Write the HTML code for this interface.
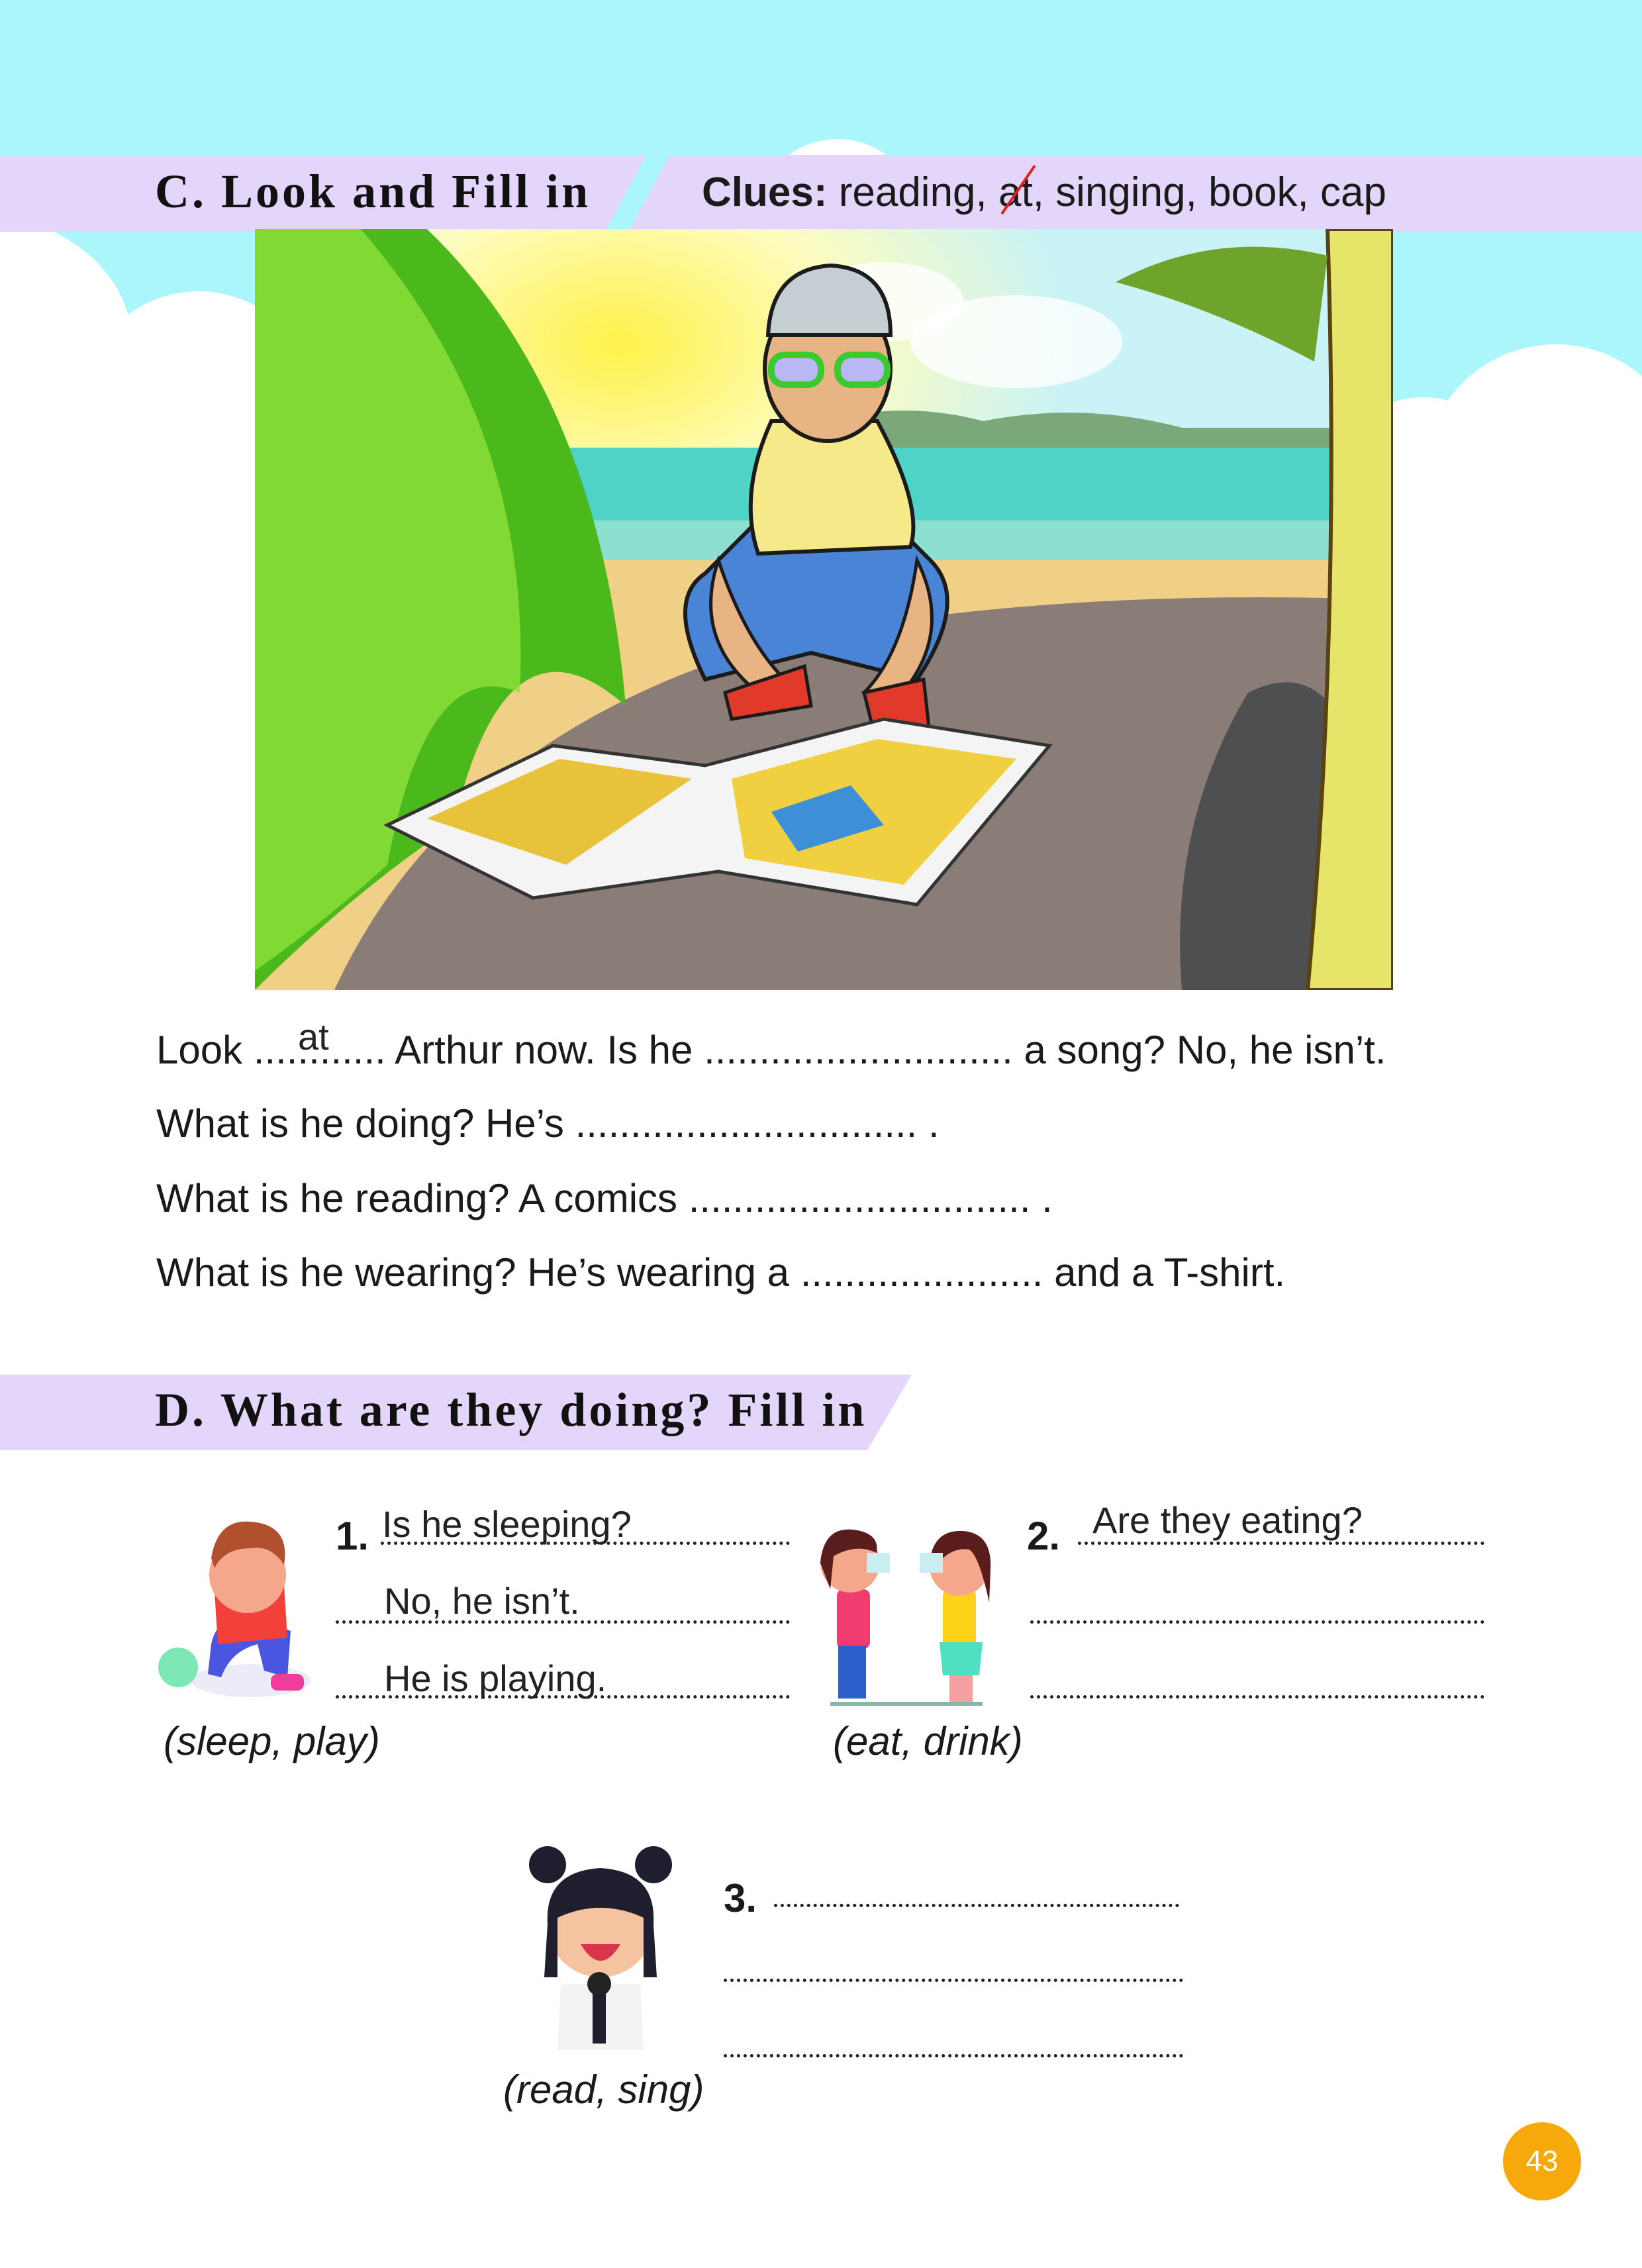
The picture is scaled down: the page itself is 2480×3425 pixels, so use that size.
<!DOCTYPE html>
<html><head><meta charset="utf-8"><style>
*{margin:0;padding:0;box-sizing:border-box}
body{width:2480px;height:3425px;position:relative;background:#fff;overflow:hidden;font-family:"Liberation Sans",sans-serif;color:#1a1a1a}
.a{position:absolute}
.t{position:absolute;font-size:60px;white-space:nowrap;line-height:1}
.h{font-family:"Liberation Serif",serif;font-weight:bold;font-size:72px;letter-spacing:4px;position:absolute;white-space:nowrap;line-height:1;color:#111}
.dl{position:absolute;height:0;border-bottom:5px dotted #222}
.hw{position:absolute;font-size:56px;white-space:nowrap;line-height:1;color:#222}
.it{font-style:italic}
</style></head><body>
<div class="a" style="left:0;top:0;width:2480px;height:620px;background:#aaf6fb"></div>
<div class="a" style="left:1140px;top:210px;width:250px;height:250px;border-radius:50%;background:#fff"></div>
<div class="a" style="left:-300px;top:320px;width:500px;height:400px;border-radius:50%;background:#fff"></div>
<div class="a" style="left:120px;top:440px;width:360px;height:360px;border-radius:50%;background:#fff"></div>
<div class="a" style="left:0;top:620px;width:2480px;height:200px;background:#fff"></div>
<div class="a" style="left:2150px;top:520px;width:400px;height:400px;border-radius:50%;background:#fff"></div>
<div class="a" style="left:2000px;top:600px;width:300px;height:300px;border-radius:50%;background:#fff"></div>
<svg class="a" style="left:0;top:234px" width="2480" height="116"><polygon points="0,0 976,0 914,116 0,116" fill="#e4d6fb"/><polygon points="1012,0 2480,0 2480,116 949,116" fill="#e4d6fb"/></svg>
<div class="h" style="left:234px;top:253px">C. Look and Fill in</div>
<div class="t" style="left:1060px;top:260px;font-size:62px"><b>Clues:</b> reading, <span style="position:relative">at<svg style="position:absolute;left:-5px;top:-8px" width="70" height="80"><line x1="10" y1="75" x2="60" y2="2" stroke="#e02020" stroke-width="4"/></svg></span>, singing, book, cap</div>
<svg class="a" style="left:385px;top:346px" width="1719" height="1149" viewBox="0 0 1719 1149">
<defs><radialGradient id="sun" cx="0.32" cy="0.15" r="0.4"><stop offset="0" stop-color="#fff24a"/><stop offset="0.5" stop-color="#fdfcc0"/><stop offset="1" stop-color="#c9f3f7"/></radialGradient></defs>
<rect width="1719" height="1149" fill="url(#sun)"/>
<ellipse cx="950" cy="110" rx="120" ry="60" fill="#fff" opacity=".8"/><ellipse cx="1150" cy="170" rx="160" ry="70" fill="#fff" opacity=".8"/>
<path d="M800 310 Q950 250 1100 290 Q1250 260 1400 300 L1719 300 L1719 340 L800 340Z" fill="#7ba87a"/>
<rect y="330" width="1719" height="170" fill="#4fd3c6"/>
<rect y="440" width="1719" height="60" fill="#8de0d0"/>
<rect y="500" width="1719" height="650" fill="#f0cf86"/>
<path d="M120 1149 Q300 760 800 620 Q1200 540 1719 560 L1719 1149Z" fill="#8a7d77"/>
<path d="M1500 700 Q1600 650 1650 760 L1660 1149 L1400 1149 Q1380 900 1500 700Z" fill="#4d4f50"/>
<path d="M0 0 L260 0 Q520 250 560 720 Q380 560 300 900 Q150 1000 0 1149Z" fill="#4bb81c"/>
<path d="M0 0 L160 0 Q420 300 400 700 Q260 640 200 960 Q100 1050 0 1120Z" fill="#8fe23a" opacity=".8"/>
<path d="M1620 0 L1719 0 L1719 1149 L1590 1149 Q1640 600 1620 0Z" fill="#e7e46a" stroke="#5a4310" stroke-width="6"/>
<path d="M1300 80 Q1450 0 1620 40 L1600 200 Q1450 120 1300 80Z" fill="#6fa42c"/>
<path d="M680 520 Q620 560 680 680 L840 640 L1000 680 Q1080 560 1020 500 L940 420 L780 420Z" fill="#4a84d6" stroke="#1b1b1b" stroke-width="6"/>
<path d="M780 290 L940 290 Q1010 420 990 480 L760 490 Q730 400 780 290Z" fill="#f5e98a" stroke="#1b1b1b" stroke-width="6"/>
<path d="M700 500 Q740 620 800 680 L760 700 Q660 620 700 500Z" fill="#e9b483" stroke="#1b1b1b" stroke-width="5"/>
<path d="M1000 500 Q980 640 920 700 L960 720 Q1060 620 1000 500Z" fill="#e9b483" stroke="#1b1b1b" stroke-width="5"/>
<ellipse cx="865" cy="210" rx="95" ry="110" fill="#e9b483" stroke="#1b1b1b" stroke-width="6"/>
<path d="M775 160 Q780 60 870 55 Q960 60 960 160 Z" fill="#c5cfd3" stroke="#1b1b1b" stroke-width="6"/>
<rect x="780" y="190" width="75" height="45" rx="20" fill="#b9b8f4" stroke="#3ac92e" stroke-width="10"/>
<rect x="880" y="190" width="75" height="45" rx="20" fill="#b9b8f4" stroke="#3ac92e" stroke-width="10"/>
<path d="M710 700 L830 660 L840 720 L720 740Z" fill="#e23a2a" stroke="#1b1b1b" stroke-width="5"/>
<path d="M920 700 L1010 680 L1030 860 L960 860Z" fill="#e23a2a" stroke="#1b1b1b" stroke-width="5"/>
<path d="M200 900 L450 780 L680 810 L950 740 L1200 780 L1000 1020 L700 970 L420 1010Z" fill="#f4f4f4" stroke="#333" stroke-width="5"/>
<path d="M260 890 L460 800 L660 830 L470 960Z" fill="#e8c23a"/><path d="M720 830 L940 770 L1150 800 L980 990 L740 950Z" fill="#f0d040"/>
<path d="M780 880 L900 840 L950 900 L820 940Z" fill="#3d8fd6"/>
</svg>
<div class="t" style="left:236px;top:1556px">Look ............ Arthur now. Is he ............................ a song? No, he isn’t.</div>
<div class="hw" style="left:450px;top:1538px">at</div>
<div class="t" style="left:236px;top:1667px">What is he doing? He’s ............................... .</div>
<div class="t" style="left:236px;top:1780px">What is he reading? A comics ............................... .</div>
<div class="t" style="left:236px;top:1892px">What is he wearing? He’s wearing a ...................... and a T-shirt.</div>
<svg class="a" style="left:0;top:2076px" width="1400" height="114"><polygon points="0,0 1377,0 1310,114 0,114" fill="#e4d6fb"/></svg>
<div class="h" style="left:234px;top:2093px">D. What are they doing? Fill in</div>
<svg class="a" style="left:229px;top:2283px" width="250" height="300" viewBox="0 0 250 300">
<ellipse cx="150" cy="255" rx="90" ry="25" fill="#ecebf8"/>
<circle cx="40" cy="235" r="30" fill="#7de8b5"/>
<path d="M90 200 Q100 150 160 160 L210 180 L205 250 L170 240 L160 200 Q120 210 105 250 L85 245Z" fill="#4a55e0"/>
<path d="M95 120 L200 110 L205 190 L100 200Z" fill="#f2403a"/>
<circle cx="145" cy="95" r="58" fill="#f4a78a"/>
<path d="M90 70 Q100 10 150 15 Q210 20 200 80 Q180 50 150 55 Q110 55 95 85Z" fill="#b0502f"/>
<rect x="180" y="245" width="50" height="25" rx="10" fill="#f03c9a"/>
</svg>
<div class="t" style="left:507px;top:2290px;font-weight:bold">1.</div>
<div class="dl" style="left:575px;top:2328px;width:618px"></div>
<div class="hw" style="left:577px;top:2274px">Is he sleeping?</div>
<div class="dl" style="left:507px;top:2447px;width:686px"></div>
<div class="hw" style="left:580px;top:2390px">No, he isn’t.</div>
<div class="dl" style="left:507px;top:2560px;width:686px"></div>
<div class="hw" style="left:580px;top:2507px">He is playing.</div>
<div class="t it" style="left:247px;top:2600px">(sleep, play)</div>
<svg class="a" style="left:1224px;top:2290px" width="330" height="300" viewBox="0 0 330 300">
<rect x="30" y="280" width="230" height="6" fill="#88b7a8"/>
<rect x="40" y="110" width="50" height="90" rx="10" fill="#f03c70"/><rect x="42" y="195" width="42" height="80" fill="#2d5ec9"/>
<circle cx="60" cy="70" r="45" fill="#f4a78a"/><path d="M15 70 Q20 15 65 20 Q105 25 100 55 Q70 40 35 60 L30 110Z" fill="#5a1d1d"/>
<rect x="200" y="110" width="50" height="90" rx="10" fill="#ffd21a"/><path d="M195 190 L260 190 L255 240 L200 240Z" fill="#4fe0c2"/><rect x="210" y="240" width="35" height="40" fill="#f4a0a0"/>
<circle cx="225" cy="75" r="45" fill="#f4a78a"/><path d="M180 70 Q185 20 230 22 Q275 25 272 80 L270 130 Q255 60 240 50 Q210 45 185 80Z" fill="#5a1d1d"/>
<rect x="85" y="55" width="35" height="30" fill="#c9eef2"/><rect x="165" y="55" width="35" height="30" fill="#c9eef2"/>
</svg>
<div class="t" style="left:1551px;top:2290px;font-weight:bold">2.</div>
<div class="dl" style="left:1628px;top:2328px;width:614px"></div>
<div class="hw" style="left:1650px;top:2268px">Are they eating?</div>
<div class="dl" style="left:1556px;top:2447px;width:686px"></div>
<div class="dl" style="left:1556px;top:2560px;width:686px"></div>
<div class="t it" style="left:1258px;top:2600px">(eat, drink)</div>
<svg class="a" style="left:787px;top:2786px" width="250" height="330" viewBox="0 0 250 330">
<circle cx="40" cy="30" r="28" fill="#1e1e2e"/><circle cx="200" cy="30" r="28" fill="#1e1e2e"/>
<path d="M60 210 L180 210 L185 310 L55 310Z" fill="#f3f3f3"/>
<circle cx="120" cy="120" r="80" fill="#f6c3a0"/>
<path d="M40 120 Q35 40 120 35 Q205 40 200 120 L205 200 L185 200 L185 110 Q120 80 55 110 L55 200 L35 200Z" fill="#1e1e2e"/>
<path d="M90 150 Q120 200 150 150Z" fill="#d8344a"/>
<rect x="108" y="210" width="20" height="90" fill="#1e1e2e"/><circle cx="118" cy="210" r="18" fill="#222"/>
</svg>
<div class="t" style="left:1093px;top:2837px;font-weight:bold">3.</div>
<div class="dl" style="left:1169px;top:2875px;width:612px"></div>
<div class="dl" style="left:1093px;top:2988px;width:694px"></div>
<div class="dl" style="left:1093px;top:3102px;width:694px"></div>
<div class="t it" style="left:760px;top:3126px">(read, sing)</div>
<div class="a" style="left:2270px;top:3205px;width:118px;height:118px;border-radius:50%;background:#f7a80a;color:#fff;font-size:44px;text-align:center;line-height:118px">43</div>
</body></html>
